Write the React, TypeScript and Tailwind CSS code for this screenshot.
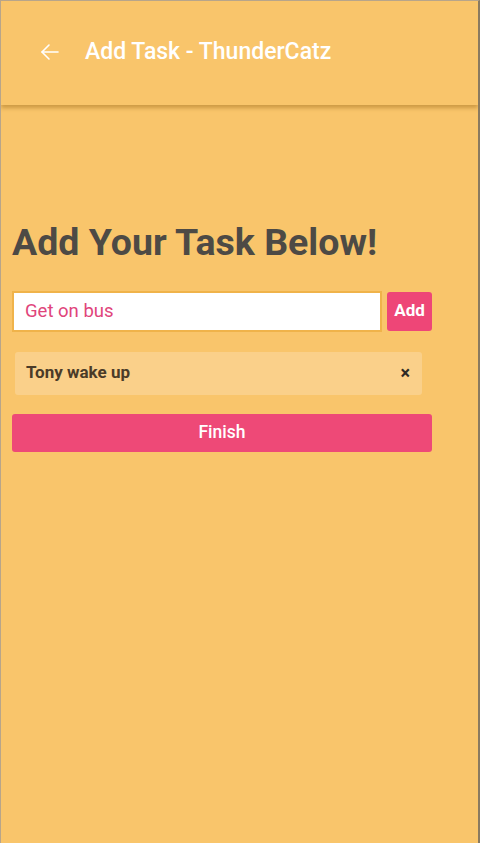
import React, { useState } from 'react';

export default function App() {
  const [task, setTask] = useState('Get on bus');
  const tasks = ['Tony wake up'];

  return (
    <div className="h-[843px] w-[480px] bg-[#f9c56b] border-l border-t border-[#b8a58a] border-r-2 border-r-[#8a7a60] overflow-hidden font-['Roboto',sans-serif]">
      {/* Header */}
      <div className="h-[104px] bg-[#f9c56b] shadow-[0_3px_4px_rgba(150,100,20,0.45)] flex items-center pl-[37px] pb-[2px]">
        <svg width="24" height="24" viewBox="0 0 24 24" fill="none" stroke="#fff" strokeWidth="1.6" strokeLinecap="round" strokeLinejoin="round">
          <path d="M20 12H4" />
          <path d="M11 5l-7 7 7 7" />
        </svg>
        <span className="ml-[23px] text-white text-[23px] font-medium">Add Task - ThunderCatz</span>
      </div>

      {/* Content */}
      <div className="px-[11px] pt-[119px]">
        <h1 className="text-[37.5px] font-bold text-[#4d4a45] leading-none">Add Your Task Below!</h1>

        <div className="mt-[29px] flex items-center gap-[5px]">
          <input
            value={task}
            onChange={(e) => setTask(e.target.value)}
            className="w-[370px] h-[41px] bg-white border-2 border-[#f0b34a] px-[11px] text-[18.5px] text-[#e0457b] outline-none"
          />
          <button className="h-[39px] w-[45px] rounded-[3px] bg-[#ee4677] text-white text-[17px] font-bold">Add</button>
        </div>

        <div className="mt-[20px] ml-[3px] w-[407px] h-[43px] rounded-[3px] bg-[#fad08a] flex items-center justify-between pl-[11px] pr-[12px]">
          <span className="text-[17px] font-bold text-[#4a3b28]">{tasks[0]}</span>
          <span className="text-[18px] font-bold text-[#2e2a25] leading-none">×</span>
        </div>

        <button className="mt-[19px] w-[420px] h-[38px] rounded-[3px] bg-[#ee4977] text-white text-[17.5px] font-medium">Finish</button>
      </div>
    </div>
  );
}
